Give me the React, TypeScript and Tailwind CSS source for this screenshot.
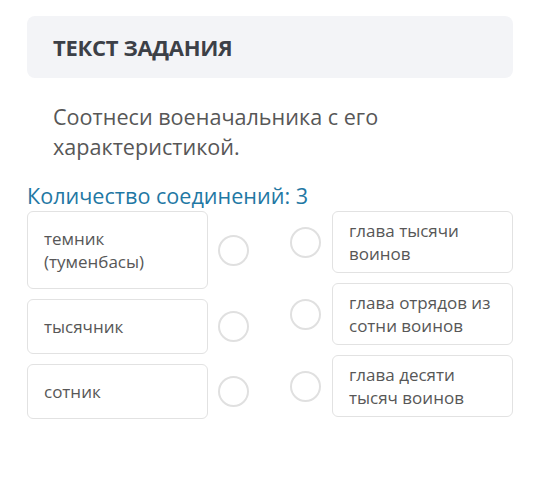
import React from "react";

const Circle = () => (
  <div className="w-[31px] h-[31px] rounded-full border-[2.5px] border-[#e0e0e0] bg-white shrink-0" />
);

export default function App() {
  const left = [
    { t: ["темник", "(туменбасы)"] },
    { t: ["тысячник"] },
    { t: ["сотник"] },
  ];
  const right = [
    { t: ["глава тысячи", "воинов"] },
    { t: ["глава отрядов из", "сотни воинов"] },
    { t: ["глава десяти", "тысяч воинов"] },
  ];
  return (
    <div
      className="w-[540px] h-[480px] bg-white px-[27px] pt-[16px]"
      style={{ fontFamily: '"Open Sans", "Noto Sans", sans-serif' }}
    >
      <div className="h-[62px] bg-[#f3f4f7] rounded-[8px] flex items-center px-[26px]">
        <span className="text-[22px] font-bold text-[#3c4047] tracking-[-0.3px]">ТЕКСТ ЗАДАНИЯ</span>
      </div>
      <p className="mt-[24px] px-[26px] text-[21.6px] leading-[30px] text-[#575757]">
        Соотнеси военачальника с его
        <br />
        характеристикой.
      </p>
      <div className="mt-[19px] text-[21.6px] leading-[30px] text-[#1f78a4]">Количество соединений: 3</div>
      <div className="flex justify-between">
        <div className="flex flex-col gap-[10px]">
          {left.map((r, i) => (
            <div key={i} className="flex items-center gap-[10px]">
              <div className="w-[181px] border border-[#e2e2e2] rounded-[6px] px-[16px] py-[15px] text-[17px] leading-[23px] text-[#575757]">
                {r.t.map((l, j) => (
                  <div key={j}>{l}</div>
                ))}
              </div>
              <Circle />
            </div>
          ))}
        </div>
        <div className="flex flex-col gap-[10px]">
          {right.map((r, i) => (
            <div key={i} className="flex items-center gap-[11px]">
              <Circle />
              <div className="w-[181px] border border-[#e2e2e2] rounded-[6px] px-[16px] py-[7px] text-[17px] leading-[23px] text-[#575757]">
                {r.t.map((l, j) => (
                  <div key={j}>{l}</div>
                ))}
              </div>
            </div>
          ))}
        </div>
      </div>
    </div>
  );
}
